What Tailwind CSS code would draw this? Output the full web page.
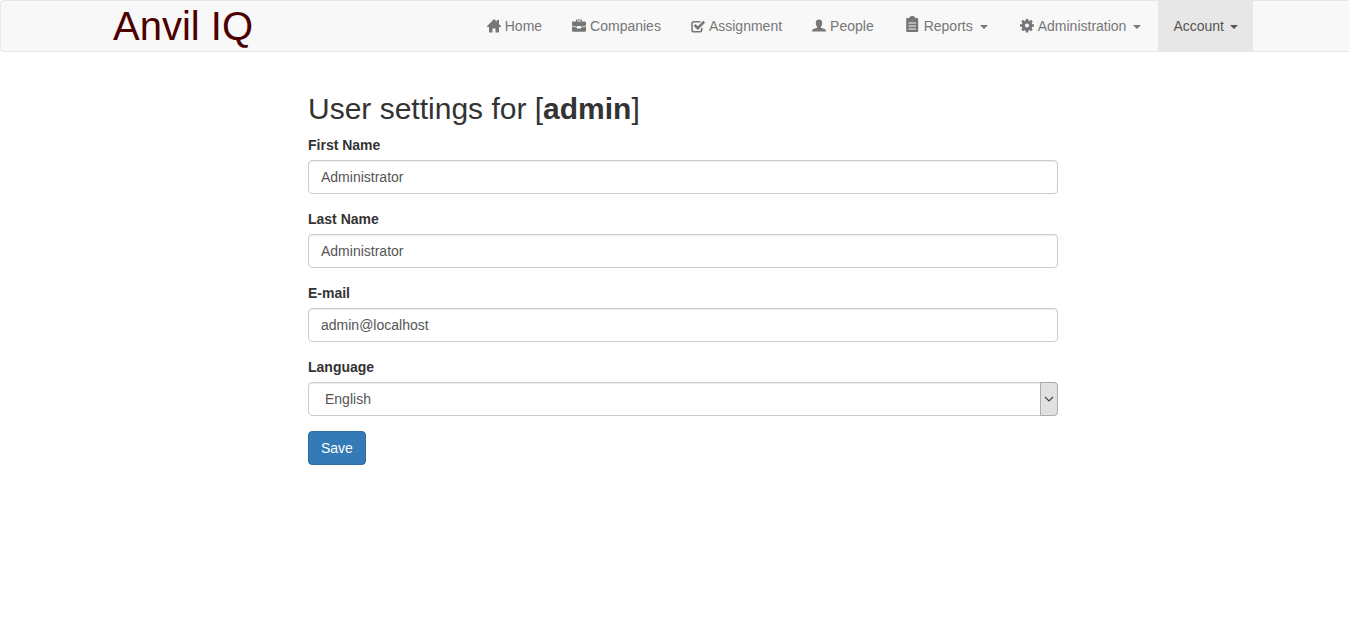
<!DOCTYPE html>
<html lang="en">
<head>
<meta charset="utf-8">
<meta name="viewport" content="width=device-width, initial-scale=1">
<title>Anvil IQ</title>
<script src="https://cdn.jsdelivr.net/npm/@tailwindcss/browser@4"></script>
</head>
<body class="bg-white font-['Liberation_Sans',Arial,sans-serif] text-sm leading-5 text-[#333]">
<header class="rounded-l border border-r-0 border-[#e7e7e7] bg-[#f8f8f8] pl-4">
  <div class="mx-auto flex max-w-[1170px] items-center justify-between px-[15px]">
    <a href="#" class="text-[40px] leading-[50px] whitespace-nowrap text-[#4d0000]">Anvil IQ</a>
    <nav aria-label="Main">
      <ul class="flex text-[#777]">
        <li><a href="#" class="flex items-center gap-1 px-[15px] py-[15px]">
          <svg class="size-[14px]" viewBox="0 0 14 14" fill="currentColor" aria-hidden="true"><path d="M7 0 9.800 2.800V1H12V5L14.300 7.500V8H12V13.500H8.500V9.500H5.500V13.500H2V8H-.3V7.500Z"/></svg>Home</a></li>
        <li><a href="#" class="flex items-center gap-1 px-[15px] py-[15px]">
          <svg class="size-[14px]" viewBox="0 0 14 14" fill="currentColor" aria-hidden="true"><path fill-rule="evenodd" d="M4 2.500V1.500Q4 .5 5 .5H9Q10 .5 10 1.500V2.500H13Q14 2.500 14 3.500V6.500L9 8V7H5V8L0 6.500V3.500Q0 2.500 1 2.500ZM5 2.500H9V1.500H5Z"/><path d="M0 7.200 5 8.700V9.500H9V8.700L14 7.200V11.800Q14 12.800 13 12.800H1Q0 12.800 0 11.800Z"/></svg>Companies</a></li>
        <li><a href="#" class="flex items-center gap-1 px-[15px] py-[15px]">
          <svg class="size-[14px]" viewBox="0 0 14 14" fill="none" stroke="currentColor" aria-hidden="true"><path stroke-width="1.600" d="M9.500 2.800H3Q1 2.800 1 4.800V10.700Q1 12.700 3 12.700H8.700Q10.700 12.700 10.700 10.700V9"/><path stroke-width="2.600" d="M3.600 6 6.800 9.200 13.100 2.700"/></svg>Assignment</a></li>
        <li><a href="#" class="flex items-center gap-1 px-[15px] py-[15px]">
          <svg class="size-[14px]" viewBox="0 0 14 14" fill="currentColor" aria-hidden="true"><path d="M7 .5C9.300 .5 10.200 1.800 10.200 4 10.200 5.800 9.600 7 8.900 7.800V8.800L12.700 10Q14 10.500 14 12.500H0Q0 10.500 1.300 10L5.100 8.800V7.800C4.400 7 3.800 5.800 3.800 4 3.800 1.800 4.700 .5 7 .5Z"/></svg>People</a></li>
        <li><a href="#" class="flex items-center gap-1 py-[15px] pr-[17px] pl-[15px]">
          <svg class="-my-1 mb-0 h-4 w-4" viewBox="0 0 16 16" fill="currentColor" aria-hidden="true"><path fill-rule="evenodd" d="M5.500 1.500C6 .7 6.600 0 8.300 0 10 0 10.700.7 11 1.500L11.500 2H13.200Q14.200 2 14.200 3V15Q14.200 16 13.200 16H3.200Q2.200 16 2.200 15V3Q2.200 2 3.200 2H5ZM4.500 6.500V7.500H12V6.500ZM4.500 9.500V10.500H12V9.500ZM4.500 12.500V13.500H12V12.500Z"/></svg>Reports
          <svg class="ml-[3px] h-[6px] w-2" viewBox="0 0 8 6" fill="currentColor" aria-hidden="true"><path d="M0 2H8L4 6Z"/></svg></a></li>
        <li><a href="#" class="flex items-center gap-1 py-[15px] pr-[17px] pl-[15px]">
          <svg class="size-[14px]" viewBox="0 0 14 14" aria-hidden="true"><circle cx="7" cy="6.500" r="3.700" fill="none" stroke="currentColor" stroke-width="3.200"/><path fill="none" stroke="currentColor" stroke-width="2.600" d="M7 -.5V2.500M7 10.500V13.500M0 6.500H3M11 6.500H14M2.100 1.600 4 3.500M10 9.500 11.900 11.400M2.100 11.400 4 9.500M10 3.500 11.900 1.600"/></svg>Administration
          <svg class="ml-[3px] h-[6px] w-2" viewBox="0 0 8 6" fill="currentColor" aria-hidden="true"><path d="M0 2H8L4 6Z"/></svg></a></li>
        <li><a href="#" class="flex items-center gap-1 bg-[#e7e7e7] px-[15px] py-[15px] text-[#555]">Account
          <svg class="ml-0.5 h-[6px] w-2" viewBox="0 0 8 6" fill="currentColor" aria-hidden="true"><path d="M0 2H8L4 6Z"/></svg></a></li>
      </ul>
    </nav>
  </div>
</header>
<main class="pt-10 pl-[17px]">
  <form class="mx-auto flex max-w-[750px] flex-col items-start">
    <h2 class="mb-[10px] text-[30px] leading-[33px]">User settings for [<strong>admin</strong>]</h2>
    <label for="first" class="mb-[5px] font-bold">First Name</label>
    <input id="first" type="text" value="Administrator" class="mb-[15px] h-[34px] w-full rounded border border-[#ccc] px-3 text-[#555] shadow-[inset_0_1px_1px_rgba(0,0,0,0.075)]">
    <label for="last" class="mb-[5px] font-bold">Last Name</label>
    <input id="last" type="text" value="Administrator" class="mb-[15px] h-[34px] w-full rounded border border-[#ccc] px-3 text-[#555] shadow-[inset_0_1px_1px_rgba(0,0,0,0.075)]">
    <label for="email" class="mb-[5px] font-bold">E-mail</label>
    <input id="email" type="email" value="admin@localhost" class="mb-[15px] h-[34px] w-full rounded border border-[#ccc] px-3 text-[#555] shadow-[inset_0_1px_1px_rgba(0,0,0,0.075)]">
    <label for="lang" class="mb-[5px] font-bold">Language</label>
    <div class="relative mb-[15px] w-full">
      <select id="lang" class="block h-[34px] w-full appearance-none rounded border border-[#ccc] bg-white px-4 text-[#555] shadow-[inset_0_1px_1px_rgba(0,0,0,0.075)]"><option>English</option></select>
      <span class="pointer-events-none absolute inset-y-0 right-0 flex w-[18px] items-center justify-center rounded-r border border-[#adadad] bg-[#e1e1e1] pr-px">
        <svg class="h-[6px] w-[10px]" viewBox="0 0 10 6" fill="none" stroke="#444" stroke-width="1.200" aria-hidden="true"><path d="M1 1 5 5 9 1"/></svg>
      </span>
    </div>
    <button type="submit" class="h-[34px] rounded border border-[#2e6da4] bg-[#337ab7] px-3 text-white">Save</button>
  </form>
</main>
</body>
</html>
